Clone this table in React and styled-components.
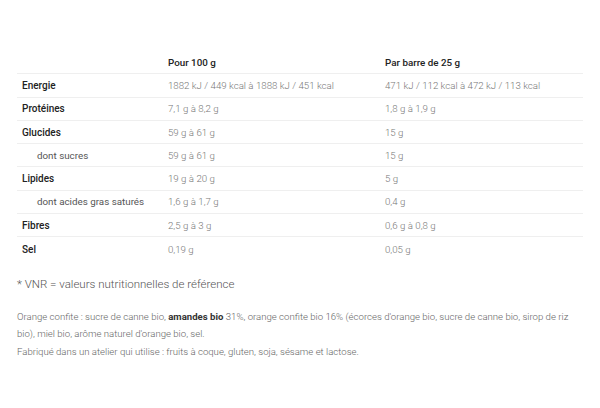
import React from "react";
import styled, { createGlobalStyle } from "styled-components";

const GlobalStyle = createGlobalStyle`
  body {
    margin: 0;
    background: #fff;
    font-family: Roboto, "Liberation Sans", sans-serif;
  }
`;

const Page = styled.div`
  width: 600px;
  height: 408px;
  padding: 51px 17px 0 17px;
  box-sizing: border-box;
  background: #fff;
`;

const Table = styled.div`
  display: grid;
  grid-template-columns: 146px 217px 1fr;
`;

const Cell = styled.div`
  height: 23.3px;
  box-sizing: border-box;
  display: flex;
  align-items: center;
  padding-left: ${(p) => (p.$indent ? "20px" : "5px")};
  border-bottom: ${(p) => (p.$last ? "none" : "1px solid #efefef")};
  font-size: ${(p) => (p.$small ? "9.8px" : "10px")};
  white-space: nowrap;
`;

const Head = styled(Cell)`
  color: #222;
  font-weight: 500;
  font-size: 9.8px;
`;

const Label = styled(Cell)`
  color: ${(p) => (p.$indent ? "#555" : "#222")};
  font-weight: ${(p) => (p.$indent ? 400 : 500)};
`;

const Value = styled(Cell)`
  color: #777;
  font-weight: 300;
  font-size: 9.7px;
`;

const Note = styled.p`
  margin: 14px 0 0 0;
  font-size: 11.5px;
  font-weight: 300;
  color: #555;
  line-height: 18px;
`;

const Ingredients = styled.p`
  margin: 15px 0 0 0;
  font-size: 9.6px;
  font-weight: 300;
  color: #666;
  line-height: 17.5px;
  strong {
    font-weight: 700;
    color: #333;
  }
`;

const rows = [
  ["Energie", "1882 kJ / 449 kcal à 1888 kJ / 451 kcal", "471 kJ / 112 kcal à 472 kJ / 113 kcal"],
  ["Protéines", "7,1 g à 8,2 g", "1,8 g à 1,9 g"],
  ["Glucides", "59 g à 61 g", "15 g"],
  ["dont sucres", "59 g à 61 g", "15 g", true],
  ["Lipides", "19 g à 20 g", "5 g"],
  ["dont acides gras saturés", "1,6 g à 1,7 g", "0,4 g", true],
  ["Fibres", "2,5 g à 3 g", "0,6 g à 0,8 g"],
  ["Sel", "0,19 g", "0,05 g"],
];

export default function App() {
  return (
    <Page>
      <GlobalStyle />
      <Table>
        <Head />
        <Head>Pour 100 g</Head>
        <Head>Par barre de 25 g</Head>
        {rows.map(([label, a, b, sub], i) => {
          const last = i === rows.length - 1;
          return (
            <React.Fragment key={label}>
              <Label $indent={sub} $small={sub} $last={last}>{label}</Label>
              <Value $last={last}>{a}</Value>
              <Value $last={last}>{b}</Value>
            </React.Fragment>
          );
        })}
      </Table>
      <Note>* VNR = valeurs nutritionnelles de référence</Note>
      <Ingredients>
        Orange confite : sucre de canne bio, <strong>amandes bio</strong> 31%, orange confite bio 16% (écorces d'orange bio, sucre de canne bio, sirop de riz bio), miel bio, arôme naturel d'orange bio, sel.
        <br />
        Fabriqué dans un atelier qui utilise : fruits à coque, gluten, soja, sésame et lactose.
      </Ingredients>
    </Page>
  );
}
